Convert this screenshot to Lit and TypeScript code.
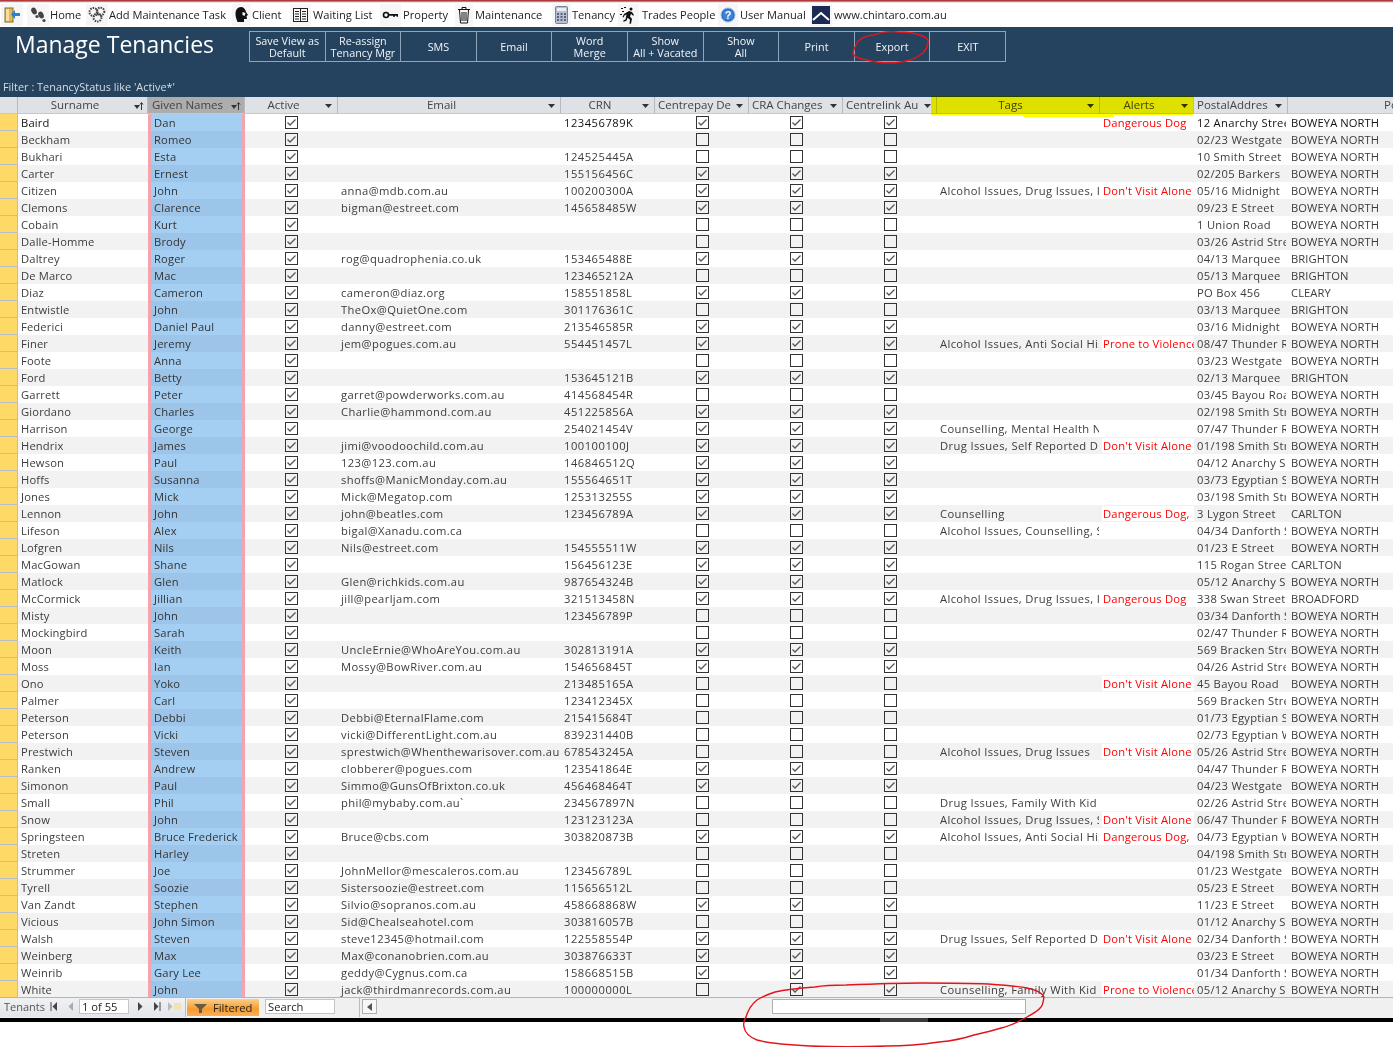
import { LitElement, html, css, svg } from "lit";
import { customElement } from "lit/decorators.js";

const BN = "BOWEYA NORTH";
const DVA = "Don't Visit Alone";
const DD = "Dangerous Dog";
const PV = "Prone to Violence";
// surname|given|email|crn|flags(cp,cra,cl)|tags|alert|postal|suburb
const RAW = `Baird|Dan||123456789K|1||${DD}|12 Anarchy Street|
Beckham|Romeo|||0|||02/23 Westgate|
Bukhari|Esta||124525445A|0|||10 Smith Street|
Carter|Ernest||155156456C|1|||02/205 Barkers|
Citizen|John|anna@mdb.com.au|100200300A|1|Alcohol Issues, Drug Issues, Intellectual|${DVA}|05/16 Midnight|
Clemons|Clarence|bigman@estreet.com|145658485W|1|||09/23 E Street|
Cobain|Kurt|||0|||1 Union Road|
Dalle-Homme|Brody|||0|||03/26 Astrid Street|
Daltrey|Roger|rog@quadrophenia.co.uk|153465488E|1|||04/13 Marquee|BRIGHTON
De Marco|Mac||123465212A|0|||05/13 Marquee|BRIGHTON
Diaz|Cameron|cameron@diaz.org|158551858L|1|||PO Box 456|CLEARY
Entwistle|John|TheOx@QuietOne.com|301176361C|0|||03/13 Marquee|BRIGHTON
Federici|Daniel Paul|danny@estreet.com|213546585R|1|||03/16 Midnight|
Finer|Jeremy|jem@pogues.com.au|554451457L|1|Alcohol Issues, Anti Social History|${PV}|08/47 Thunder Road|
Foote|Anna|||0|||03/23 Westgate|
Ford|Betty||153645121B|1|||02/13 Marquee|BRIGHTON
Garrett|Peter|garret@powderworks.com.au|414568454R|0|||03/45 Bayou Road|
Giordano|Charles|Charlie@hammond.com.au|451225856A|1|||02/198 Smith Street|
Harrison|George||254021454V|1|Counselling, Mental Health Needs||07/47 Thunder Road|
Hendrix|James|jimi@voodoochild.com.au|100100100J|1|Drug Issues, Self Reported Drug Use|${DVA}|01/198 Smith Street|
Hewson|Paul|123@123.com.au|146846512Q|1|||04/12 Anarchy Street|
Hoffs|Susanna|shoffs@ManicMonday.com.au|155564651T|1|||03/73 Egyptian Street|
Jones|Mick|Mick@Megatop.com|125313255S|1|||03/198 Smith Street|
Lennon|John|john@beatles.com|123456789A|1|Counselling|Dangerous Dog,|3 Lygon Street|CARLTON
Lifeson|Alex|bigal@Xanadu.com.ca||0|Alcohol Issues, Counselling, Self Harm||04/34 Danforth Street|
Lofgren|Nils|Nils@estreet.com|154555511W|1|||01/23 E Street|
MacGowan|Shane||156456123E|1|||115 Rogan Street|CARLTON
Matlock|Glen|Glen@richkids.com.au|987654324B|1|||05/12 Anarchy Street|
McCormick|Jillian|jill@pearljam.com|321513458N|1|Alcohol Issues, Drug Issues, Intellectual|${DD}|338 Swan Street|BROADFORD
Misty|John||123456789P|0|||03/34 Danforth Street|
Mockingbird|Sarah|||0|||02/47 Thunder Road|
Moon|Keith|UncleErnie@WhoAreYou.com.au|302813191A|1|||569 Bracken Street|
Moss|Ian|Mossy@BowRiver.com.au|154656845T|1|||04/26 Astrid Street|
Ono|Yoko||213485165A|0||${DVA}|45 Bayou Road|
Palmer|Carl||123412345X|0|||569 Bracken Street|
Peterson|Debbi|Debbi@EternalFlame.com|215415684T|0|||01/73 Egyptian Street|
Peterson|Vicki|vicki@DifferentLight.com.au|839231440B|0|||02/73 Egyptian Way|
Prestwich|Steven|sprestwich@Whenthewarisover.com.au|678543245A|0|Alcohol Issues, Drug Issues|${DVA}|05/26 Astrid Street|
Ranken|Andrew|clobberer@pogues.com|123541864E|1|||04/47 Thunder Road|
Simonon|Paul|Simmo@GunsOfBrixton.co.uk|456468464T|1|||04/23 Westgate|
Small|Phil|phil@mybaby.com.au\`|234567897N|0|Drug Issues, Family With Kid||02/26 Astrid Street|
Snow|John||123123123A|0|Alcohol Issues, Drug Issues, Self Harm|${DVA}|06/47 Thunder Road|
Springsteen|Bruce Frederick|Bruce@cbs.com|303820873B|1|Alcohol Issues, Anti Social History|Dangerous Dog,|04/73 Egyptian Way|
Streten|Harley|||0|||04/198 Smith Street|
Strummer|Joe|JohnMellor@mescaleros.com.au|123456789L|0|||01/23 Westgate|
Tyrell|Soozie|Sistersoozie@estreet.com|115656512L|0|||05/23 E Street|
Van Zandt|Stephen|Silvio@sopranos.com.au|458668868W|1|||11/23 E Street|
Vicious|John Simon|Sid@Chealseahotel.com|303816057B|0|||01/12 Anarchy Street|
Walsh|Steven|steve12345@hotmail.com|122558554P|1|Drug Issues, Self Reported Drug Use|${DVA}|02/34 Danforth Street|
Weinberg|Max|Max@conanobrien.com.au|303876633T|1|||03/23 E Street|
Weinrib|Gary Lee|geddy@Cygnus.com.ca|158668515B|1|||01/34 Danforth Street|
White|John|jack@thirdmanrecords.com.au|100000000L|2|Counselling, Family With Kid|${PV}|05/12 Anarchy Street|`;

const ROWS = RAW.split("\n").map((l) => {
  const [surname, given, email, crn, flag, tags, alert, postal, suburb] = l.split("|");
  return { surname, given, email, crn, flag, tags, alert, postal, suburb: suburb || BN };
});

const BUTTONS = [
  ["Save View as", "Default"],
  ["Re-assign", "Tenancy Mgr"],
  ["SMS"],
  ["Email"],
  ["Word", "Merge"],
  ["Show", "All + Vacated"],
  ["Show", "All"],
  ["Print"],
  ["Export"],
  ["EXIT"],
];

const ic = (w: number, inner: unknown) =>
  html`<svg class="ic" width=${w} height="20" viewBox="0 0 ${w} 20">${inner}</svg>`;

const ICONS: Record<string, unknown> = {
  exit: ic(18, svg`<rect x="2" y="3" width="8" height="14" fill="#e2b95a" stroke="#8a6a20"/><rect x="3" y="4" width="3" height="12" fill="#f4dfa0"/><path d="M17 8H12V5L8 9.5 12 14V11H17Z" fill="#2a7fd6"/>`),
  home: ic(18, svg`<g fill="#444"><ellipse cx="5" cy="6" rx="2.600" ry="3.600" transform="rotate(-25 5 6)"/><circle cx="8" cy="11.500" r="1.600"/><ellipse cx="12" cy="10" rx="2.600" ry="3.600" transform="rotate(-25 12 10)"/><circle cx="15" cy="15.500" r="1.600"/></g>`),
  gear: ic(18, svg`<g fill="none" stroke="#444"><circle cx="5.500" cy="7" r="4" stroke-width="2" stroke-dasharray="1.500 1"/><circle cx="12.500" cy="6.500" r="3.800" stroke-width="2" stroke-dasharray="1.500 1"/><circle cx="9.500" cy="12.500" r="4" stroke-width="2" stroke-dasharray="1.500 1"/></g>`),
  client: ic(15, svg`<path d="M7 2C3.500 2 1.500 5 1.500 9c0 3 1 5 2 8h6.500v-3h3l-.5-3 1.500-1-2-3C11.500 4 9.500 2 7 2Z" fill="#111"/><path d="M8.500 7l3 1-1 3-2-1Z" fill="#fff"/>`),
  list: ic(17, svg`<g fill="none" stroke="#222"><rect x="1.500" y="3.500" width="14" height="13"/><path d="M8.500 3.500V16.500M3 6.500H7M3 9H7M3 11.500H7M3 14H7M10 6.500H14M10 9H14M10 11.500H14M10 14H14"/></g>`),
  key: ic(17, svg`<circle cx="4" cy="10" r="2.500" fill="none" stroke="#111" stroke-width="1.600"/><path d="M6.500 9H16V11.800H14.500V10.800H13V11.800H11V10.800H6.500Z" fill="#111"/>`),
  trash: ic(14, svg`<g fill="none" stroke="#111"><path d="M1 4.500H13M5 4V2.500H9V4" /><path d="M2.500 5L3.500 18H10.500L11.500 5M5 7V16M7 7V16M9 7V16"/></g>`),
  calc: ic(15, svg`<rect x="1.500" y="1.500" width="12" height="17" rx="1" fill="#b8bfd0" stroke="#7a8198"/><rect x="3" y="3" width="9" height="3" fill="#e8ecf4"/><g fill="#5a6280"><rect x="3" y="8" width="2" height="2"/><rect x="6.500" y="8" width="2" height="2"/><rect x="10" y="8" width="2" height="2"/><rect x="3" y="11" width="2" height="2"/><rect x="6.500" y="11" width="2" height="2"/><rect x="10" y="11" width="2" height="2"/><rect x="3" y="14" width="2" height="2"/><rect x="6.500" y="14" width="2" height="2"/><rect x="10" y="14" width="2" height="2"/></g>`),
  run: ic(17, svg`<g fill="#111"><circle cx="11" cy="4" r="1.500"/><path d="M9 6l3 1 2 3-1 .7-2-2-1 3 2 2-1 5h-1.500l.5-4-2.500-2-1 3-3 1-.3-1.200 2.300-1 1-5-2 1-1 2-1-.5 1.500-3Z"/><rect x="1" y="3" width="2" height="1"/><rect x="4" y="2" width="2" height="1"/><rect x="2" y="6" width="2" height="1"/><rect x="0" y="9" width="2" height="1"/></g>`),
  help: ic(16, svg`<circle cx="8" cy="10" r="7" fill="#2f6fc0" stroke="#9cc0ea"/><circle cx="8" cy="10" r="5" fill="#3f86d8"/><text x="8" y="14" font-size="11" font-weight="700" font-family="Liberation Sans" fill="#fff" text-anchor="middle">?</text>`),
  logo: ic(18, svg`<rect x="0" y="1" width="18" height="18" fill="#1c2a55"/><path d="M1 15L9 8 17 15" fill="none" stroke="#fff" stroke-width="2"/>`),
};

const NAV: [string, string, number, number][] = [
  ["exit", "", 1, 26],
  ["home", "Home", 27, 50],
  ["gear", "Add Maintenance Task", 86, 109],
  ["client", "Client", 232, 252],
  ["list", "Waiting List", 290, 313],
  ["key", "Property", 380, 403],
  ["trash", "Maintenance", 455, 475],
  ["calc", "Tenancy", 552, 572],
  ["run", "Trades People", 618, 642],
  ["help", "User Manual", 718, 740],
  ["logo", "www.chintaro.com.au", 810, 834],
];

const chk = (on: boolean) => html`<svg class="cb" width="13" height="13" viewBox="0 0 13 13">
  <rect x=".5" y=".5" width="12" height="12" fill="none" stroke="#333"/>
  ${on ? svg`<path d="M2.500 6.500L5 9 10.500 3.500" fill="none" stroke="#555" stroke-width="1.300"/>` : null}
</svg>`;

const drop = html`<svg class="arrow" width="7" height="4" viewBox="0 0 7 4"><path d="M0 0H7L3.500 4Z" fill="#333"/></svg>`;
const sortd = html`<svg class="arrow sort" width="10" height="8" viewBox="0 0 10 8"><path d="M0 3H6L3 7Z" fill="#333"/><path d="M7.500 8V1M6 2.500L7.500 .5 9 2.500" stroke="#333" fill="none"/></svg>`;

@customElement("app-root")
export class AppRoot extends LitElement {
  static styles = css`
    :host { display: flex; flex-direction: column; width: 1393px; height: 1047px; overflow: hidden; position: relative; background: #fff;
      font-family: "Open Sans", "Noto Sans", sans-serif; font-size: 11.2px; color: #3c3c3c; }
    .topline { height: 3px; flex: none; background: linear-gradient(#b03a3a 0 1px, #cf7a7a 1px 2px, #e8e8e8 2px); }
    .nav { height: 24px; flex: none; position: relative; color: #222; font-size: 11.100px; }
    .nav .ic-wrap { position: absolute; top: 1px; height: 22px; display: flex; align-items: center; justify-content: center; background: #f6f6f6; padding: 0 2px; }
    .nav .lbl { position: absolute; top: 0; line-height: 24px; white-space: nowrap; }
    .banner { height: 70px; flex: none; background: #25435f; color: #f0f4f7; display: flex; flex-direction: column; }
    .banner-top { display: flex; height: 35px; padding-top: 4px; flex: none; }
    .title { width: 249px; padding-left: 15px; box-sizing: border-box; font-size: 23px; line-height: 27px; color: #fff; white-space: nowrap; }
    .btns { display: flex; height: 31px; border: 1px solid #8ea5bb; box-sizing: border-box; }
    .btn { width: 75.600px; box-sizing: border-box; border-right: 1px solid #8ea5bb; display: flex; flex-direction: column; align-items: center; justify-content: center; font-size: 10.800px; line-height: 12.500px; white-space: nowrap; padding-top: 1px; }
    .btn:last-child { border-right: 0; width: 75px; }
    .filter { margin-top: 13px; padding-left: 3px; font-size: 10.900px; line-height: 15px; color: #d5dde4; }
    .grid { display: grid; grid-template-columns: 18px 130px 97px 93px 223px 94px 94px 94px 94px 163px 94px 94px 192px; }
    .head { height: 17px; flex: none; background: #dee1e6; color: #444; line-height: 16px; }
    .hc { position: relative; text-align: center; border-right: 1px solid #b6b9bf; box-sizing: border-box; overflow: hidden; white-space: nowrap; height: 17px; padding: 0 16px 0 1px; border-bottom: 1px solid #c5c8ce; font-size: 11.500px; }
    .hc.g { background: #adadad; padding-left: 0; padding-right: 17px; }
    .hc.l { text-align: left; padding: 0 13px 0 3px; }
    .hc.l.far { padding-left: 96px; }
    .arrow { position: absolute; right: 5px; top: 7px; }
    .sort { right: 3px; top: 5px; }
    .body { height: 883px; flex: none; overflow: hidden; }
    .row { height: 17px; background: #fff; line-height: 17px; }
    .row.alt { background: #f2f2f2; }
    .row.first { color: #111; }
    .sel { background: #ffd966; border-right: 1px solid #b9bdc9; border-bottom: 1px solid #b9bdc9; box-sizing: border-box; }
    .c { padding: 0 0 0 3px; overflow: hidden; white-space: nowrap; box-sizing: border-box; height: 17px; }
    .sn { letter-spacing: .15px; }
    .gn { background: #a5cff2; border-left: 3px solid #f4a4ac; border-right: 3px solid #f4a4ac; padding-left: 3px; color: #333; letter-spacing: .15px; }
    .alt .gn { background: #9cc5e9; }
    .em { letter-spacing: .38px; }
    .crn { letter-spacing: .5px; }
    .tg { letter-spacing: .37px; margin-right: 1px; }
    .pa { letter-spacing: .3px; margin-right: 2px; }
    .sb { letter-spacing: .08px; }
    .ck { display: flex; align-items: center; justify-content: center; padding: 0; }
    .cb { display: block; }
    .al { padding: 0 0 0 3px; overflow: hidden; white-space: nowrap; height: 15px; margin: 1px 0 1px 0; line-height: 15px; letter-spacing: .2px; }
    .al.on { background: #fff; color: #f00; margin-left: 2px; padding-left: 1px; }
    .status { height: 21px; flex: none; display: flex; background: #f0f0f0; border-top: 1px solid #b5b5b5; box-sizing: border-box; position: relative; color: #555; font-size: 11px; }
    .st-left { width: 186px; flex: none; background: linear-gradient(#f0f1f3, #e3e5ea); border-right: 1px solid #bbb; position: relative; height: 19px; box-sizing: border-box; }
    .st-left span.t { position: absolute; left: 4px; top: 1px; line-height: 15px; }
    .st-left svg { position: absolute; top: 4px; }
    .pg { position: absolute; left: 79px; top: 1px; width: 50px; height: 15px; background: #fff; border: 1px solid #c5c5c5; box-sizing: border-box; line-height: 13px; padding-left: 2px; color: #222; font-size: 11.200px; }
    .filtered { width: 72px; margin-left: 1px; height: 17px; flex: none; margin-top: 1px; background: linear-gradient(#fbd08a, #f79a2c 60%, #f7b05e); position: relative; color: #222; line-height: 17px; padding-left: 26px; box-sizing: border-box; font-size: 11.200px; }
    .filtered svg { position: absolute; left: 7px; top: 5px; }
    .search { margin-left: 6px; margin-top: 1px; width: 70px; height: 15px; flex: none; background: #fff; border: 1px solid #c5c5c5; box-sizing: border-box; line-height: 13px; padding-left: 2px; color: #222; font-size: 11.200px; }
    .divider { margin-left: 24px; width: 0; height: 19px; border-left: 1px solid #bbb; flex: none; }
    .sb-btn { margin: 1px 0 0 2px; width: 15px; height: 15px; flex: none; background: #f7f7f7; border: 1px solid #b0b0b0; box-sizing: border-box; display: flex; align-items: center; justify-content: center; }
    .track { margin: 1px 0 0 395px; width: 254px; height: 15px; flex: none; background: #fff; border: 1px solid #b0b0b0; box-sizing: border-box; }
    .bar { height: 4px; flex: none; background: linear-gradient(90deg, #000 880px, #3a3a3a 880px 928px, #000 928px); }
    .ink { position: absolute; left: 0; top: 0; pointer-events: none; }
    .marker { mix-blend-mode: multiply; }
  `;

  render() {
    return html`
      <div class="topline"></div>
      <div class="nav">
        ${NAV.map(([k, t, ix, tx]) => html`
          <div class="ic-wrap" style="left:${ix}px">${ICONS[k]}</div>
          ${t ? html`<span class="lbl" style="left:${tx}px">${t}</span>` : null}`)}
      </div>
      <div class="banner">
        <div class="banner-top">
          <div class="title">Manage Tenancies</div>
          <div class="btns">
            ${BUTTONS.map((b) => html`<div class="btn">${b.map((l) => html`<span>${l}</span>`)}</div>`)}
          </div>
        </div>
        <div class="filter">Filter : TenancyStatus like 'Active*'</div>
      </div>
      <div class="head grid">
        <div class="hc"></div>
        <div class="hc">Surname${sortd}</div>
        <div class="hc g">Given Names${sortd}</div>
        <div class="hc">Active${drop}</div>
        <div class="hc">Email${drop}</div>
        <div class="hc">CRN${drop}</div>
        <div class="hc l">Centrepay De${drop}</div>
        <div class="hc l">CRA Changes${drop}</div>
        <div class="hc l">Centrelink Au${drop}</div>
        <div class="hc">Tags${drop}</div>
        <div class="hc">Alerts${drop}</div>
        <div class="hc l">PostalAddres${drop}</div>
        <div class="hc l far">PostalSuburb</div>
      </div>
      <div class="body">
        ${ROWS.map((r, i) => html`
          <div class="row grid ${i % 2 ? "alt" : ""} ${i === 0 ? "first" : ""}">
            <div class="sel"></div>
            <div class="c sn">${r.surname}</div>
            <div class="c gn">${r.given}</div>
            <div class="c ck">${chk(true)}</div>
            <div class="c em">${r.email}</div>
            <div class="c crn">${r.crn}</div>
            <div class="c ck">${chk(r.flag === "1")}</div>
            <div class="c ck">${chk(r.flag !== "0")}</div>
            <div class="c ck">${chk(r.flag !== "0")}</div>
            <div class="c tg">${r.tags}</div>
            <div class="al ${r.alert ? "on" : ""}">${r.alert}</div>
            <div class="c pa">${r.postal}</div>
            <div class="c sb">${r.suburb}</div>
          </div>`)}
      </div>
      <div class="status">
        <div class="st-left">
          <span class="t">Tenants</span>
          <svg style="left:50px" width="8" height="9" viewBox="0 0 8 9"><path d="M1 0V9" stroke="#444"/><path d="M7 0V9L2.500 4.500Z" fill="#444"/></svg>
          <svg style="left:68px" width="6" height="9" viewBox="0 0 6 9"><path d="M5 0V9L.5 4.500Z" fill="#aaa"/></svg>
          <div class="pg">1 of 55</div>
          <svg style="left:137px" width="6" height="9" viewBox="0 0 6 9"><path d="M1 0V9L5.500 4.500Z" fill="#444"/></svg>
          <svg style="left:153px" width="8" height="9" viewBox="0 0 8 9"><path d="M1 0V9L5.500 4.500Z" fill="#444"/><path d="M7 0V9" stroke="#444"/></svg>
          <svg style="left:168px" width="13" height="9" viewBox="0 0 13 9"><path d="M0 0V9L4.500 4.500Z" fill="#bbb"/><rect x="6" y="1" width="7" height="7" fill="#f0e3b0"/></svg>
        </div>
        <div class="filtered">
          <svg width="13" height="9" viewBox="0 0 13 9"><path d="M0 0H13L8 5V9H5V5Z" fill="#6a5a44"/></svg>
          Filtered
        </div>
        <div class="search">Search</div>
        <div class="divider"></div>
        <div class="sb-btn"><svg width="5" height="8" viewBox="0 0 5 8"><path d="M5 0V8L0 4Z" fill="#555"/></svg></div>
        <div class="track"></div>
      </div>
      <div class="bar"></div>
      <svg class="ink" width="1393" height="1047" viewBox="0 0 1393 1047">
        <path class="marker" d="M931 96H1193V115H1113V117H1023V115.500H931Z" fill="#ffff00"/>
        <path d="M857 43C860 38 866 36 873 35C882 32 890 31 897 32C906 32 915 33 920 35C926 37 929 40 928 43C927 48 926 50 923 53C919 56 915 59 910 60C902 62 897 63 890 63C882 63 874 62 867 60C860 59 855 57 853 54C853 50 855 47 857 43Z" fill="none" stroke="#e3141c" stroke-width="1.400"/>
        <path d="M1044 997C1043 1002 1043 1005 1041 1007C1037 1012 1032 1014 1027 1017C1018 1022 1010 1026 1001 1028C992 1031 983 1033 974 1035C962 1039 950 1041 939 1042C920 1045 903 1046 886 1046C860 1047 835 1047 810 1046C790 1045 770 1044 757 1040C749 1037 745 1033 744 1027C743 1023 744 1020 746 1017C748 1010 752 1004 757 1000C763 996 769 994 775 992C788 989 801 988 815 987C826 985 836 985 846 985C871 984 896 983 921 983C944 983 966 983 988 984C1003 985 1017 986 1027 988C1037 990 1042 993 1044 997Z" fill="none" stroke="#e3141c" stroke-width="1.400"/>
      </svg>
    `;
  }
}
